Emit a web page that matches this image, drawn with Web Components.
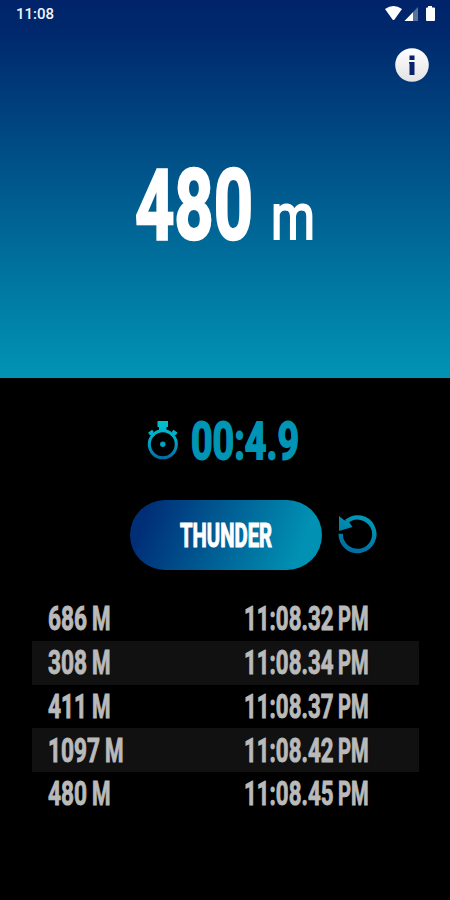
<!DOCTYPE html>
<html lang="en">
<head>
<meta charset="UTF-8">
<meta name="viewport" content="width=device-width, initial-scale=1">
<title>Thunder</title>
<style>
    body {
        margin: 0;
        background: #000;
        font-family: Roboto, "Liberation Sans", sans-serif;
    }
</style>
</head>
<body>
<storm-app></storm-app>

<script>
// Squeezed lettering: the box is as wide as the word and as tall as its capitals
class CondensedText extends HTMLElement {
    constructor() {
        super();
        this.attachShadow({ mode: "open" });
    }

    connectedCallback() {
        const get = (name, fallback) => Number(this.getAttribute(name) || fallback);
        const width = get("width", 40);
        const cap = get("cap", 23);
        this.shadowRoot.innerHTML = `
            <style>
                :host { display: block; flex: none; }
                svg { display: block; overflow: visible; }
                text {
                    font-family: Roboto, "Liberation Sans", sans-serif;
                    font-weight: ${get("weight", 700)};
                    fill: currentColor;
                    stroke: currentColor;
                    stroke-width: ${get("stroke", 0)};
                    vector-effect: non-scaling-stroke;
                }
            </style>
            <svg width="${width}" height="${cap}">
                <text font-size="${cap / 0.711}">${this.getAttribute("text")}</text>
            </svg>
        `;
        const text = this.shadowRoot.querySelector("text");
        const squeeze = width / text.getComputedTextLength();
        text.setAttribute("transform", `translate(0 ${cap}) scale(${squeeze} 1)`);
    }
}

class StatusBar extends HTMLElement {
    constructor() {
        super();
        this.attachShadow({ mode: "open" }).innerHTML = `
            <style>
                :host {
                    display: flex;
                    justify-content: space-between;
                    height: 29px;
                    padding: 0 15px 0 16px;
                    box-sizing: border-box;
                    color: #f1f4fa;
                    font-size: 15px;
                    font-weight: 500;
                    line-height: 29px;
                }
                svg { display: block; }
            </style>
            <slot></slot>
            <svg width="50" height="29" viewBox="385 0 50 29" fill="#fff">
                <path d="M385 9Q393.500 3 402 9L394.500 19.500Q393.500 20.700 392.500 19.500Z"/>
                <path d="M418 7V21H404.500Z" fill-opacity=".35"/>
                <path d="M413 12.200V21H404.500Z"/>
                <path d="M428 6H432V7.500H434Q435 7.500 435 8.500V20Q435 21 434 21H427Q426 21 426 20V8.500Q426 7.500 427 7.500H428Z"/>
            </svg>
        `;
    }
}

class DistancePanel extends HTMLElement {
    constructor() {
        super();
        this.attachShadow({ mode: "open" }).innerHTML = `
            <style>
                :host {
                    display: flex;
                    flex-direction: column;
                    height: 378px;
                    background: linear-gradient(#002369 0, #00286c 30px, #0094b5 100%);
                    color: #fff;
                }
                .info {
                    display: block;
                    align-self: flex-end;
                    margin: 19px 21px 0 0;
                }
                .distance {
                    display: flex;
                    align-items: flex-end;
                    justify-content: center;
                    gap: 18px;
                    margin-top: 87px;
                }
            </style>
            <status-bar>11:08</status-bar>
            <svg class="info" width="34" height="34" viewBox="0 0 34 34">
                <defs>
                    <linearGradient id="disc" x2="0" y2="1">
                        <stop offset="0" stop-color="#fff"/>
                        <stop offset="1" stop-color="#e3e3e3"/>
                    </linearGradient>
                </defs>
                <circle cx="17" cy="17" r="16.800" fill="url(#disc)"/>
                <path fill="#07216a" d="M14.500 7.500H19.500V12H14.500ZM14 14H19.500V27H14.500V15.500H14Z"/>
            </svg>
            <div class="distance">
                <condensed-text text="480" width="118" cap="70" stroke="2.200"></condensed-text>
                <condensed-text text="m" width="44" cap="46" weight="400" stroke="1.700"></condensed-text>
            </div>
        `;
    }
}

class StopWatch extends HTMLElement {
    constructor() {
        super();
        this.attachShadow({ mode: "open" }).innerHTML = `
            <style>
                :host {
                    display: flex;
                    align-items: center;
                    height: 42px;
                    margin: 41px 0 0 147px;
                    gap: 12px;
                    color: #0095b5;
                }
            </style>
            <svg width="32" height="42" viewBox="147 419 32 42">
                <defs>
                    <linearGradient id="watch" gradientUnits="userSpaceOnUse" x1="0" y1="420" x2="0" y2="460">
                        <stop offset="0" stop-color="#00c2cf"/>
                        <stop offset=".5" stop-color="#00a9c5"/>
                        <stop offset="1" stop-color="#006aa5"/>
                    </linearGradient>
                </defs>
                <path fill="url(#watch)" d="M157.500 421H168V427H166.500V432H159V427H157.500Z"/>
                <g fill="none" stroke="url(#watch)">
                    <circle cx="162.800" cy="444.300" r="13.500" stroke-width="3.100"/>
                    <path stroke-width="3" d="M149 434L153 430.800M176.600 434L172.600 430.800M151 432.400L154 436M174.600 432.400L171.600 436"/>
                </g>
                <circle cx="162.800" cy="444.300" r="2.700" fill="#00a5c1"/>
            </svg>
            <condensed-text text="00:4.9" width="108" cap="37" stroke="1.600"></condensed-text>
        `;
    }
}

class ThunderControls extends HTMLElement {
    constructor() {
        super();
        this.attachShadow({ mode: "open" }).innerHTML = `
            <style>
                :host {
                    display: flex;
                    align-items: center;
                    gap: 15px;
                    margin: 39px 0 0 129.500px;
                }
                button {
                    display: flex;
                    align-items: center;
                    justify-content: center;
                    width: 192.500px;
                    height: 70px;
                    padding: 0 0 0 1px;
                    border: none;
                    border-radius: 35px;
                    background: linear-gradient(110deg, #002f78 10%, #0091b3 87%);
                    color: #fff;
                }
            </style>
            <button>
                <condensed-text text="THUNDER" width="92" cap="24" stroke="1"></condensed-text>
            </button>
            <svg width="42" height="42" viewBox="337 514 42 42">
                <defs>
                    <linearGradient id="turn" gradientUnits="userSpaceOnUse" x1="365" y1="515" x2="350" y2="554">
                        <stop offset="0" stop-color="#009bb8"/>
                        <stop offset="1" stop-color="#006a9f"/>
                    </linearGradient>
                </defs>
                <path fill="none" stroke="url(#turn)" stroke-width="4.400" d="M346.500 521.500A16.800 16.800 0 1 1 340.700 533.800"/>
                <path fill="url(#turn)" d="M339 516L344 520L349 522L352.500 527L339 531Z"/>
            </svg>
        `;
    }
}

class StrikeLog extends HTMLElement {
    constructor() {
        super();
        this.attachShadow({ mode: "open" });
    }

    set data(strikes) {
        this.render(strikes);
    }

    render(strikes = []) {
        this.shadowRoot.innerHTML = `
            <style>
                :host {
                    display: block;
                    margin: 27px 31px 0 31.500px;
                    color: #bababa;
                }
                .row {
                    display: grid;
                    grid-template-columns: 196px 1fr;
                    align-items: center;
                    height: 43.750px;
                    padding-left: 16px;
                    box-sizing: border-box;
                }
                .row:nth-of-type(even) { background: #111; }
                .cell { display: flex; }
                .distance { gap: 5px; }
                .time { gap: 5px; }
            </style>
            ${strikes.map(s => `
                <div class="row">
                    <div class="cell distance">
                        <condensed-text text="${s.metres}" width="${s.metres.length * 13}" stroke=".8"></condensed-text>
                        <condensed-text text="M" width="18.500" stroke=".8"></condensed-text>
                    </div>
                    <div class="cell time">
                        <condensed-text text="${s.time}" width="89.500" stroke=".8"></condensed-text>
                        <condensed-text text="PM" width="30.500" stroke=".8"></condensed-text>
                    </div>
                </div>
            `).join("")}
        `;
    }
}

class StormApp extends HTMLElement {
    constructor() {
        super();
        this.attachShadow({ mode: "open" }).innerHTML = `
            <style>
                :host {
                    display: block;
                    width: 450px;
                    height: 900px;
                    overflow: hidden;
                    background: #000;
                }
            </style>
            <distance-panel></distance-panel>
            <stop-watch></stop-watch>
            <thunder-controls></thunder-controls>
            <strike-log></strike-log>
        `;
    }

    connectedCallback() {
        this.shadowRoot.querySelector("strike-log").data = [
            { metres: "686", time: "11:08.32" },
            { metres: "308", time: "11:08.34" },
            { metres: "411", time: "11:08.37" },
            { metres: "1097", time: "11:08.42" },
            { metres: "480", time: "11:08.45" }
        ];
    }
}

customElements.define("condensed-text", CondensedText);
customElements.define("status-bar", StatusBar);
customElements.define("distance-panel", DistancePanel);
customElements.define("stop-watch", StopWatch);
customElements.define("thunder-controls", ThunderControls);
customElements.define("strike-log", StrikeLog);
customElements.define("storm-app", StormApp);
</script>
</body>
</html>
